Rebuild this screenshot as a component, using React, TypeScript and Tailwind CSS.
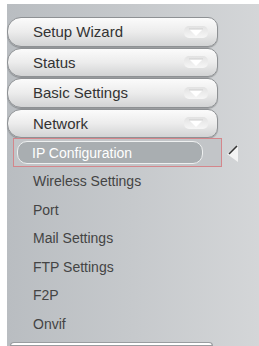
import React from 'react';

const menus = ['Setup Wizard', 'Status', 'Basic Settings', 'Network'];
const subItems = ['Wireless Settings', 'Port', 'Mail Settings', 'FTP Settings', 'F2P', 'Onvif'];

const DownArrow: React.FC = () => (
  <svg width="26" height="16" viewBox="0 0 26 16" className="shrink-0">
    <defs>
      <linearGradient id="capg" x1="0" y1="0" x2="0" y2="1">
        <stop offset="0" stopColor="#e2e2e2" />
        <stop offset="1" stopColor="#f6f6f6" />
      </linearGradient>
    </defs>
    <rect x="1" y="2" width="24" height="12" rx="5" fill="url(#capg)" />
    <path d="M6 5 L20 5 L13 12 Z" fill="#ffffff" />
    <path d="M6 5 L20 5" stroke="#cccccc" strokeWidth="1" />
  </svg>
);

const MenuButton: React.FC<{ label: string }> = ({ label }) => (
  <div className="h-[29.5px] w-[211px] flex items-center justify-between pl-[25px] pr-[8px] rounded-l-[14px] rounded-r-[10px] border border-[#8e9194] bg-gradient-to-b from-[#fbfbfb] via-[#ececec] to-[#d2d3d4] shadow-[0_1px_1px_rgba(0,0,0,0.25)]">
    <span className="text-[15px] text-[#333] leading-none">{label}</span>
    <DownArrow />
  </div>
);

export default function App() {
  return (
    <div
      className="w-[259px] h-[346px] bg-white pl-[7px] pt-[4px] overflow-hidden flex"
      style={{ fontFamily: '"Liberation Sans", Arial, sans-serif' }}
    >
      <div className="flex-1 flex flex-col pt-[13px] bg-gradient-to-r from-[#b9bdc1] via-[#c6c9cc] to-[#d4d6d8]">
        <div className="flex flex-col gap-[1px]">
          {menus.map(m => (
            <MenuButton key={m} label={m} />
          ))}
        </div>

        <div className="flex items-center">
          <div className="ml-[6px] w-[209px] h-[29px] border-[1.5px] border-[#d4868b] bg-[#c2c5c8] flex items-center px-[3px]">
            <div className="w-[186px] h-[23px] rounded-[10px] border border-[#eef0f0] bg-[#a9aeb1] flex items-center pl-[14px]">
              <span className="text-[14px] text-white leading-none">IP Configuration</span>
            </div>
          </div>
          <svg width="14" height="20" viewBox="0 0 14 20" className="ml-[4px]">
            <path d="M12 2 L1 11 L12 19 Z" fill="#f4f4f4" />
            <path d="M11 3 L3 11" stroke="#333" strokeWidth="1.6" />
          </svg>
        </div>

        <div className="flex flex-col">
          {subItems.map(s => (
            <div key={s} className="h-[28.5px] flex items-center pl-[26px]">
              <span className="text-[14px] text-[#444] leading-none">{s}</span>
            </div>
          ))}
        </div>

        <div className="mt-[4px] ml-[3px] w-[203px] h-[20px] rounded-t-[10px] border border-[#9a9da0] bg-white" />
      </div>
    </div>
  );
}
